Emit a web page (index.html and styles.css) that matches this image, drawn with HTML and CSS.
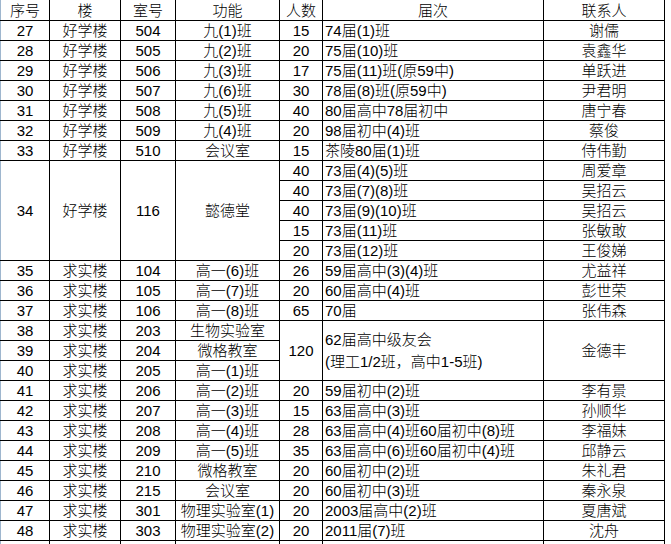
FILE: index.html
```html
<!DOCTYPE html>
<html lang="zh">
<head>
<meta charset="utf-8">
<title>教室安排</title>
<link rel="stylesheet" href="styles.css">
</head>
<body>
<table class="sheet">
<colgroup>
<col class="c-no"><col class="c-bld"><col class="c-room"><col class="c-fn"><col class="c-num"><col class="c-grade"><col class="c-contact">
</colgroup>
<thead>
<tr class="head"><th>序号</th><th>楼</th><th>室号</th><th>功能</th><th>人数</th><th>届次</th><th>联系人</th></tr>
</thead>
<tbody>
<tr><td>27</td><td>好学楼</td><td>504</td><td>九(1)班</td><td>15</td><td class="l">74届(1)班</td><td>谢儒</td></tr>
<tr><td>28</td><td>好学楼</td><td>505</td><td>九(2)班</td><td>20</td><td class="l">75届(10)班</td><td>袁鑫华</td></tr>
<tr><td>29</td><td>好学楼</td><td>506</td><td>九(3)班</td><td>17</td><td class="l">75届(11)班(原59中)</td><td>单跃进</td></tr>
<tr><td>30</td><td>好学楼</td><td>507</td><td>九(6)班</td><td>30</td><td class="l">78届(8)班(原59中)</td><td>尹君明</td></tr>
<tr><td>31</td><td>好学楼</td><td>508</td><td>九(5)班</td><td>40</td><td class="l">80届高中78届初中</td><td>唐宁春</td></tr>
<tr><td>32</td><td>好学楼</td><td>509</td><td>九(4)班</td><td>20</td><td class="l">98届初中(4)班</td><td>蔡俊</td></tr>
<tr><td>33</td><td>好学楼</td><td>510</td><td>会议室</td><td>15</td><td class="l">茶陵80届(1)班</td><td>侍伟勤</td></tr>
<tr><td rowspan="5">34</td><td rowspan="5">好学楼</td><td rowspan="5">116</td><td rowspan="5">懿德堂</td><td>40</td><td class="l">73届(4)(5)班</td><td>周爱章</td></tr>
<tr><td>40</td><td class="l">73届(7)(8)班</td><td>吴招云</td></tr>
<tr><td>40</td><td class="l">73届(9)(10)班</td><td>吴招云</td></tr>
<tr><td>15</td><td class="l">73届(11)班</td><td>张敏敢</td></tr>
<tr><td>20</td><td class="l">73届(12)班</td><td>王俊娣</td></tr>
<tr><td>35</td><td>求实楼</td><td>104</td><td>高一(6)班</td><td>26</td><td class="l">59届高中(3)(4)班</td><td>尤益祥</td></tr>
<tr><td>36</td><td>求实楼</td><td>105</td><td>高一(7)班</td><td>20</td><td class="l">60届高中(4)班</td><td>彭世荣</td></tr>
<tr><td>37</td><td>求实楼</td><td>106</td><td>高一(8)班</td><td>65</td><td class="l">70届</td><td>张伟森</td></tr>
<tr><td>38</td><td>求实楼</td><td>203</td><td>生物实验室</td><td rowspan="3">120</td><td rowspan="3" class="l two">62届高中级友会<br>(理工1/2班，高中1-5班)</td><td rowspan="3">金德丰</td></tr>
<tr><td>39</td><td>求实楼</td><td>204</td><td>微格教室</td></tr>
<tr><td>40</td><td>求实楼</td><td>205</td><td>高一(1)班</td></tr>
<tr><td>41</td><td>求实楼</td><td>206</td><td>高一(2)班</td><td>20</td><td class="l">59届初中(2)班</td><td>李有景</td></tr>
<tr><td>42</td><td>求实楼</td><td>207</td><td>高一(3)班</td><td>15</td><td class="l">63届高中(3)班</td><td>孙顺华</td></tr>
<tr><td>43</td><td>求实楼</td><td>208</td><td>高一(4)班</td><td>28</td><td class="l">63届高中(4)班60届初中(8)班</td><td>李福妹</td></tr>
<tr><td>44</td><td>求实楼</td><td>209</td><td>高一(5)班</td><td>35</td><td class="l">63届高中(6)班60届初中(4)班</td><td>邱静云</td></tr>
<tr><td>45</td><td>求实楼</td><td>210</td><td>微格教室</td><td>20</td><td class="l">60届初中(2)班</td><td>朱礼君</td></tr>
<tr><td>46</td><td>求实楼</td><td>215</td><td>会议室</td><td>20</td><td class="l">60届初中(3)班</td><td>秦永泉</td></tr>
<tr><td>47</td><td>求实楼</td><td>301</td><td>物理实验室(1)</td><td>20</td><td class="l">2003届高中(2)班</td><td>夏唐斌</td></tr>
<tr><td>48</td><td>求实楼</td><td>303</td><td>物理实验室(2)</td><td>20</td><td class="l">2011届(7)班</td><td>沈舟</td></tr>
<tr><td></td><td></td><td></td><td></td><td></td><td></td><td></td></tr>
</tbody>
</table>
</body>
</html>
```

FILE: styles.css
```css
html, body {
  margin: 0;
  padding: 0;
  background: #fff;
  overflow: hidden;
  height: 544px;
}

.sheet {
  border-collapse: collapse;
  table-layout: fixed;
  width: 665px;
  font-family: "Liberation Sans", "Noto Sans CJK SC", sans-serif;
  font-size: 15px;
  font-weight: 300;
  color: #000;
}

.c-no { width: 49px; }
.c-bld { width: 71px; }
.c-room { width: 55px; }
.c-fn { width: 104px; }
.c-num { width: 43px; }
.c-grade { width: 221px; }
.c-contact { width: 121px; }

.sheet th,
.sheet td {
  border: 1px solid #000;
  padding: 0;
  height: 19px;
  line-height: 19px;
  text-align: center;
  vertical-align: middle;
  white-space: nowrap;
  overflow: hidden;
  font-weight: 300;
}

.sheet tr > :first-child { border-left-color: #9eb6ce; }

.sheet thead th {
  border-top: none;
  height: 20px;
}

.sheet td.l {
  text-align: left;
  padding-left: 2px;
}

.sheet td.two {
  line-height: 22px;
}
```
